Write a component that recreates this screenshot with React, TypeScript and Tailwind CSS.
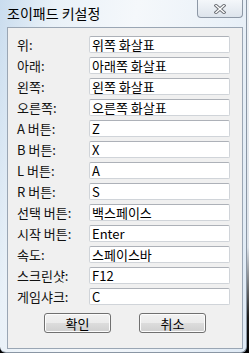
import React from "react";

const rows: [string, string][] = [
  ["위:", "위쪽 화살표"],
  ["아래:", "아래쪽 화살표"],
  ["왼쪽:", "왼쪽 화살표"],
  ["오른쪽:", "오른쪽 화살표"],
  ["A 버튼:", "Z"],
  ["B 버튼:", "X"],
  ["L 버튼:", "A"],
  ["R 버튼:", "S"],
  ["선택 버튼:", "백스페이스"],
  ["시작 버튼:", "Enter"],
  ["속도:", "스페이스바"],
  ["스크린샷:", "F12"],
  ["게임샤크:", "C"],
];

const font = { fontFamily: '"Noto Sans CJK KR", "Liberation Sans", sans-serif' };

function Btn({ label }: { label: string }) {
  return (
    <div className="w-[67px] h-[20px] rounded-[3px] border border-[#707070] bg-[linear-gradient(#f2f2f2_0%,#ebebeb_50%,#dddddd_50%,#cfcfcf_100%)] flex items-center justify-center text-[13px] leading-none text-black shadow-[inset_0_0_0_1px_#fcfcfc]">
      {label}
    </div>
  );
}

export default function App() {
  return (
    <div
      className="w-[249px] h-[353px] bg-[linear-gradient(#eef2f6_0%,#dde3ea_70%,#1a1a1a_90%,#000_100%)] overflow-hidden"
      style={font}
    >
      <div className="w-[247px] h-[353px] rounded-b-[6px] border-r border-b border-[#8a96a4] bg-[linear-gradient(100deg,#c9dcee_0%,#e9f1f8_18%,#f5f8fb_45%,#eaf1f8_75%,#dfeaf5_100%)] flex flex-col">
        <div className="h-[27px] flex items-start">
          <div className="pl-[7px] pt-[4px] text-[14px] leading-[18px] text-black">조이패드 키설정</div>
          <div className="ml-auto mr-[3px] w-[46px] h-[18px] rounded-b-[4px] border border-t-0 border-[#8d98a6] bg-[linear-gradient(#f4f7fa,#dde4ec)] flex items-center justify-center">
            <svg width="12" height="10" viewBox="0 0 12 10">
              <path d="M2 1.5 L10 8.5 M10 1.5 L2 8.5" stroke="#6b6f75" strokeWidth="3.2" strokeLinecap="square" />
              <path d="M2 1.5 L10 8.5 M10 1.5 L2 8.5" stroke="#ffffff" strokeWidth="1.4" strokeLinecap="square" />
            </svg>
          </div>
        </div>
        <div className="ml-[7px] w-[236px] h-[322px] border border-[#9aa6b4] bg-[#f0f0f0] flex flex-col">
          <div className="pt-[8px] pl-[9px] pr-[12px] flex flex-col gap-[4px]">
            {rows.map(([l, v]) => (
              <div key={l} className="h-[17px] flex items-center">
                <div className="w-[72px] text-[13px] leading-none text-[#111] whitespace-nowrap">{l}</div>
                <div className="w-[141px] h-[17px] border border-[#d0d4d9] border-t-[#adb1b8] bg-white rounded-[2px] flex items-center pl-[2px] text-[13px] leading-none text-black whitespace-nowrap">
                  {v}
                </div>
              </div>
            ))}
          </div>
          <div className="mt-[8px] flex justify-center gap-[28px]">
            <Btn label="확인" />
            <Btn label="취소" />
          </div>
        </div>
      </div>
    </div>
  );
}
